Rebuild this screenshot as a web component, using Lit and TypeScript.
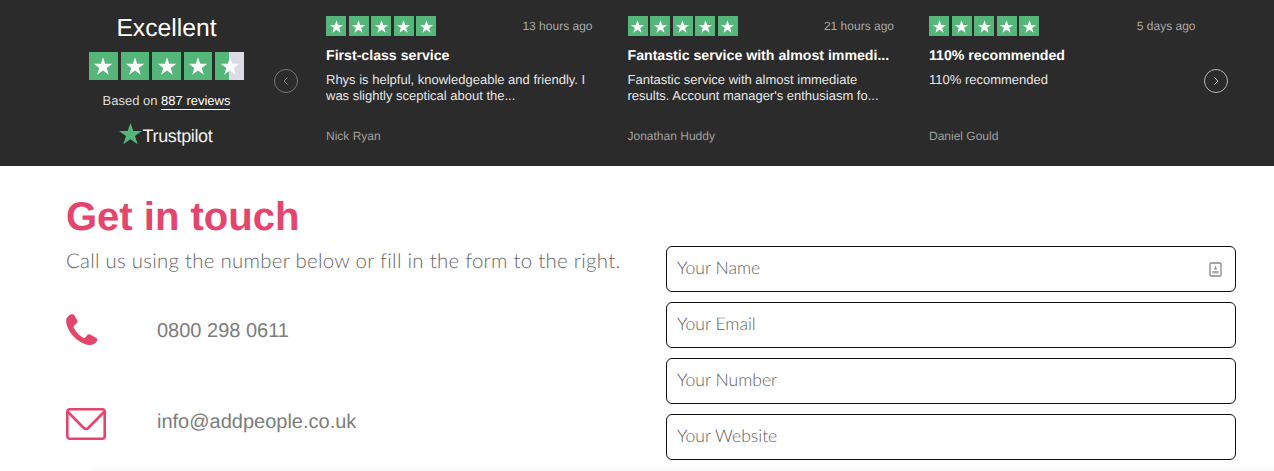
import { LitElement, html, css, svg } from "lit";
import { customElement } from "lit/decorators.js";

const STAR = "M12 3.2l2.3 6.6h7l-5.6 4.2 2.1 6.8L12 16.6l-5.8 4.2 2.1-6.8L2.7 9.8h7z";
const starIcon = () => svg`<svg class="star" viewBox="0 0 24 24"><path d=${STAR} fill="#fff"/></svg>`;

const reviews = [
  { ago: "13 hours ago", title: "First-class service", text: "Rhys is helpful, knowledgeable and friendly. I was slightly sceptical about the...", name: "Nick Ryan" },
  { ago: "21 hours ago", title: "Fantastic service with almost immedi...", text: "Fantastic service with almost immediate results. Account manager's enthusiasm fo...", name: "Jonathan Huddy" },
  { ago: "5 days ago", title: "110% recommended", text: "110% recommended", name: "Daniel Gould" },
];

@customElement("app-root")
export class AppRoot extends LitElement {
  static styles = css`
    :host { display: block; position: relative; height: 471px; overflow: hidden; background: #fff; font-family: "Liberation Sans", Arial, sans-serif; text-rendering: geometricPrecision; }
    .band { height: 166px; background: #2b2b2b; display: flex; color: #fff; }
    .score { width: 155px; margin-left: 89px; display: flex; flex-direction: column; align-items: center; }
    .excellent { font-size: 24.7px; line-height: 28px; margin-top: 15px; white-space: nowrap; }
    .bigstars { display: flex; gap: 3px; margin-top: 9px; }
    .bigstars .box { width: 28.6px; height: 28px; background: #55b67a; display: flex; align-items: center; justify-content: center; }
    .bigstars .box .star { width: 24px; height: 24px; }
    .bigstars .half { background: linear-gradient(90deg, #55b67a 0 50%, #dcdce6 50%); }
    .based { font-size: 13px; line-height: 16px; margin-top: 13px; color: #ddd; white-space: nowrap; }
    .based span { color: #fff; border-bottom: 1px solid #fff; padding-bottom: 1px; }
    .tp { display: flex; align-items: center; gap: 1px; margin-top: 17px; font-size: 18px; letter-spacing: -0.35px; color: #f2f2f2; }
    .tp svg { width: 23px; height: 23px; margin-top: -7px; margin-left: -2px; }
    .nav { width: 24px; height: 24px; border-radius: 50%; box-sizing: border-box; display: flex; align-items: center; justify-content: center; align-self: flex-start; margin-top: 69px; }
    .nav svg { width: 10px; height: 10px; }
    .prev { border: 1px solid #777; margin-left: 30px; }
    .next { border: 1px solid #b5b5b5; margin-left: 8.5px; }
    .cards { display: flex; gap: 35px; margin-left: 28px; }
    .card { width: 266.5px; display: flex; flex-direction: column; }
    .head { display: flex; justify-content: space-between; align-items: center; margin-top: 16px; height: 20px; }
    .smallstars { display: flex; gap: 2.5px; }
    .smallstars .box { width: 20px; height: 20px; background: #55b67a; display: flex; align-items: center; justify-content: center; }
    .smallstars .star { width: 17px; height: 17px; }
    .ago { font-size: 12px; color: #a8a8a8; }
    .title { font-size: 14.15px; font-weight: 700; line-height: 16px; margin-top: 11px; white-space: nowrap; }
    .text { font-size: 13px; line-height: 16px; margin-top: 9px; color: #e6e6e6; height: 32px; }
    .name { font-size: 12px; line-height: 14px; margin-top: 25px; color: #a0a0a0; }
    .main { display: flex; padding-left: 66px; height: 299px; }
    .left { width: 600px; flex: none; }
    h1 { margin: 28px 0 0; font-size: 40px; line-height: 46px; font-weight: 700; color: #e5446d; white-space: nowrap; }
    .sub { font-family: Lato, sans-serif; font-weight: 300; font-size: 20.4px; line-height: 26px; margin-top: 8px; color: #666; white-space: nowrap; letter-spacing: 0.28px; }
    .row { display: flex; align-items: center; color: #7c7c7c; font-size: 20px; }
    .row svg { flex: none; }
    .row span { margin-left: 51px; }
    .phone { margin-top: 37px; height: 40px; }
    .phone svg { margin-bottom: 3px; }
    .phone span { margin-left: 59px; }
    .mail { margin-top: 51px; height: 40px; }
    .mail svg { margin-top: 4px; }
    form { width: 570px; flex: none; display: flex; flex-direction: column; gap: 10px; margin-top: 80px; }
    .field { height: 46px; box-sizing: border-box; border: 1.5px solid #111; border-radius: 6px; display: flex; align-items: center; justify-content: space-between; padding: 0 13px 3px 10px; font-family: Lato, sans-serif; font-weight: 300; font-size: 17.5px; color: #5e5e5e; letter-spacing: 0; }
    .field svg { width: 13px; height: 15px; margin-top: 3px; }
    .fade { position: absolute; left: 92px; right: 0; top: 464px; height: 7px; background: linear-gradient(#fff, #f8f8f8); }
  `;

  render() {
    const five = [0, 1, 2, 3, 4];
    return html`
      <div class="band">
        <div class="score">
          <div class="excellent">Excellent</div>
          <div class="bigstars">
            ${five.map((i) => html`<div class="box ${i === 4 ? "half" : ""}">${starIcon()}</div>`)}
          </div>
          <div class="based">Based on <span>887 reviews</span></div>
          <div class="tp">
            <svg viewBox="0 0 24 24"><path d="M12 1l2.900 8.400H24l-7.300 5.300 2.800 8.600L12 18l-7.500 5.300 2.800-8.600L0 9.400h9.100z" fill="#55b67a"/></svg>
            Trustpilot
          </div>
        </div>
        <div class="nav prev"><svg viewBox="0 0 10 10"><path d="M6.500 1.500L3 5l3.500 3.500" fill="none" stroke="#888" stroke-width="1"/></svg></div>
        <div class="cards">
          ${reviews.map((r) => html`
            <div class="card">
              <div class="head">
                <div class="smallstars">${five.map(() => html`<div class="box">${starIcon()}</div>`)}</div>
                <div class="ago">${r.ago}</div>
              </div>
              <div class="title">${r.title}</div>
              <div class="text">${r.text}</div>
              <div class="name">${r.name}</div>
            </div>`)}
        </div>
        <div class="nav next"><svg viewBox="0 0 10 10"><path d="M3.500 1.500L7 5 3.500 8.500" fill="none" stroke="#ccc" stroke-width="1"/></svg></div>
      </div>
      <div class="main">
        <div class="left">
          <h1>Get in touch</h1>
          <div class="sub">Call us using the number below or fill in the form to the right.</div>
          <div class="row phone">
            <svg width="32" height="33" viewBox="0 0 32 32"><path d="M5.500 0.800C3 1.600 0.300 3.600 0.200 7c-.2 5 3 11.200 7.500 16 4.500 4.600 10 8 15.300 8.500 3.500.3 6.500-1.500 8-4 .6-1.100.3-2.200-.7-2.900l-6-3.600c-1-.5-2-.4-2.800.4l-2.300 2.600c-.6.6-1.300.7-2 .3-2.300-1.300-4-2.800-5.700-4.600-1.500-1.700-2.800-3.500-3.800-5.700-.3-.8-.2-1.400.5-2l2.500-2.300c.8-.8 1-1.800.5-2.800L8.500 2c-.6-1.100-1.800-1.600-3-1.200z" fill="#e5446d"/></svg>
            <span>0800 298 0611</span>
          </div>
          <div class="row mail">
            <svg width="40" height="32" viewBox="0 0 40 32"><rect x="1.300" y="1.300" width="37.400" height="29.400" rx="2.500" fill="none" stroke="#e5446d" stroke-width="2.600"/><path d="M2 4l15.800 16c1.200 1.200 3.200 1.200 4.400 0L38 4" fill="none" stroke="#e5446d" stroke-width="2.600"/></svg>
            <span>info@addpeople.co.uk</span>
          </div>
        </div>
        <form>
          <div class="field">Your Name
            <svg viewBox="0 0 13 15"><rect x="1" y="1" width="11" height="13" rx="1" fill="none" stroke="#888" stroke-width="1.300"/><path d="M6.500 3.500l1.500 4H5z" fill="#888"/><rect x="3.500" y="9" width="6" height="2.500" fill="#aaa"/></svg>
          </div>
          <div class="field">Your Email</div>
          <div class="field">Your Number</div>
          <div class="field">Your Website</div>
        </form>
      </div>
      <div class="fade"></div>
    `;
  }
}
